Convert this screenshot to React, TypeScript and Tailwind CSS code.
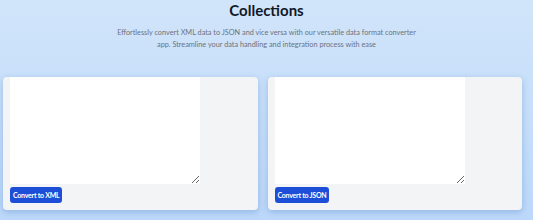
import { useState } from 'react';

export default function App() {
  const [xml, setXml] = useState('');
  const [json, setJson] = useState('');

  return (
    <div className="min-h-[220px] bg-gradient-to-b from-[#d1e5fa] to-[#bcd8fa] font-['Lato',_'Noto_Sans',_sans-serif]">
      <header className="text-center">
        <h1 className="text-[15px] font-bold leading-[20px] text-[#111827]">Collections</h1>
        <p className="mx-auto mt-[7px] max-w-[305px] text-[7.3px] leading-[12px] text-[#6b7280]">
          Effortlessly convert XML data to JSON and vice versa with our versatile data format converter app. Streamline your data handling and integration process with ease
        </p>
      </header>

      <div className="mt-[26px] grid grid-cols-2 gap-[10px] pl-[3px] pr-[11px]">
        <div className="flex h-[133px] flex-col rounded-[4px] bg-[#f3f4f6] px-[7px] pb-[7px] shadow-[0_2px_6px_rgba(96,140,200,0.45)]">
          <textarea
            value={xml}
            onChange={(event) => setXml(event.target.value)}
            className="h-[107px] w-[190px] shrink-0 bg-white text-[8px] outline-none"
          />
          <button
            type="button"
            className="mt-[3px] h-[16px] self-start rounded-[3px] bg-[#1d4ed8] px-[3px] text-[7px] font-bold leading-[16px] tracking-[-0.25px] text-white"
          >
            Convert to XML
          </button>
        </div>

        <div className="flex h-[133px] flex-col rounded-[4px] bg-[#f3f4f6] px-[7px] pb-[7px] shadow-[0_2px_6px_rgba(96,140,200,0.45)]">
          <textarea
            value={json}
            onChange={(event) => setJson(event.target.value)}
            className="h-[107px] w-[190px] shrink-0 bg-white text-[8px] outline-none"
          />
          <button
            type="button"
            className="mt-[3px] h-[16px] self-start rounded-[3px] bg-[#1d4ed8] px-[3px] text-[7px] font-bold leading-[16px] tracking-[-0.25px] text-white"
          >
            Convert to JSON
          </button>
        </div>
      </div>
    </div>
  );
}
